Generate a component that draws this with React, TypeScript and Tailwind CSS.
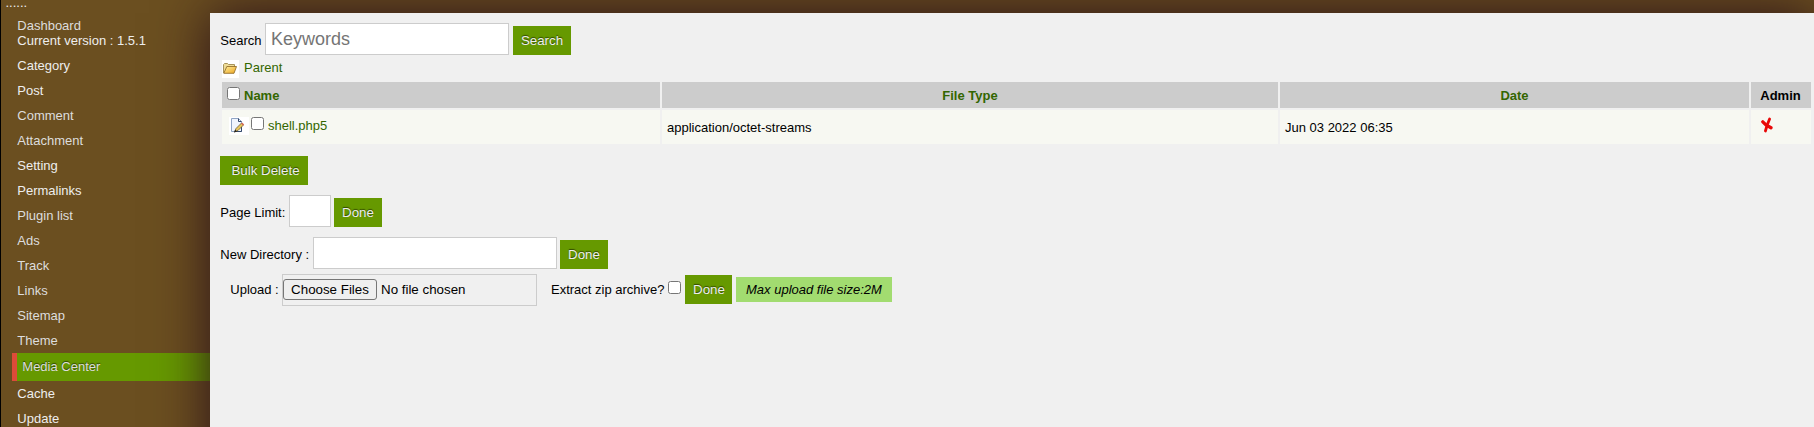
import React from "react";

const items = ["Category", "Post", "Comment", "Attachment", "Setting", "Permalinks", "Plugin list", "Ads", "Track", "Links", "Sitemap", "Theme"];
const dim = ["Comment", "Attachment", "Ads", "Track", "Links", "Sitemap", "Theme", "Plugin list"];

function Check({ className = "" }: { className?: string }) {
  return <input type="checkbox" className={"m-0 size-[13px] shrink-0 " + className} />;
}

function Btn({ children, className = "" }: { children: React.ReactNode; className?: string }) {
  return (
    <button className={"h-[29px] shrink-0 bg-[#669900] text-[13.333px] leading-[15px] text-[#eee] [text-shadow:0_-1px_1px_rgba(0,0,0,0.55)] " + className}>
      {children}
    </button>
  );
}

function Folder() {
  return (
    <svg className="h-[18px] w-[17px] shrink-0 bg-white" viewBox="0 0 17 18">
      <defs>
        <linearGradient id="fold" x1="0" y1="0" x2="1" y2="1">
          <stop offset="0" stopColor="#fff0a0" />
          <stop offset="1" stopColor="#eda41c" />
        </linearGradient>
      </defs>
      <path d="M1.5 13V4.5L2.5 3.5H5.5L6.5 4.5H12.5V7" fill="#eedc98" stroke="#a8945c" />
      <path d="M1.8 13.3L4.8 6.5H14.5L12 13.3Z" fill="url(#fold)" stroke="#96702c" strokeWidth=".9" />
    </svg>
  );
}

function Edit() {
  return (
    <svg className="h-[18px] w-5 shrink-0 bg-white" viewBox="0 0 20 18">
      <path d="M2.5 1.5H9.5L12.5 4.5V14.5H2.5Z" fill="#f0f5fd" stroke="#8fa4c4" />
      <path d="M9.5 1.5V4.5H12.5M12.5 10V14.5H6" fill="none" stroke="#34496b" />
      <path d="M5.5 15L7 11.5L12.5 6L14.5 8L9 13.5Z" fill="#e8c65c" stroke="#5a4a28" strokeWidth=".7" />
      <path d="M12 6.5L13.2 5.4L15.2 7.4L14 8.5Z" fill="#d56a5a" />
      <path d="M5 15.5L6.2 12.8L8 14.4Z" fill="#222" />
    </svg>
  );
}

export default function App() {
  return (
    <div className="flex h-[427px] w-[1814px] overflow-hidden border-l border-black bg-[#6b4f20] font-['Liberation_Sans',Arial,sans-serif] text-[13px] leading-[15px] text-black">
      <nav className="w-[209px] shrink-0 text-[#eee]">
        <div className="h-[18px] pl-[4.5px] leading-[5px]">......</div>
        <div className="pl-[16.3px] text-[#ddd]">Dashboard</div>
        <div className="pl-[16.3px]">Current version : 1.5.1</div>
        <ul className="mt-[5px]">
          {items.map((t) => (
            <li key={t} className={"flex h-[25px] items-center pl-[16.3px] " + (dim.includes(t) ? "text-[#ddd]" : "")}>{t}</li>
          ))}
        </ul>
        <div className="ml-[11px] h-7 border-l-[5px] border-[#dd4b39] bg-[#669900] pt-[6px] pl-[5.3px] text-[#ddd] [text-shadow:0_-1px_1px_rgba(0,0,0,0.55)]">Media Center</div>
        <div className="flex h-[25px] items-center pl-[16.3px]">Cache</div>
        <div className="flex h-[25px] items-center pl-[16.3px]">Update</div>
      </nav>

      <main className="relative mt-[13px] h-[500px] w-[1608px] shrink-0 bg-[#f0f0f0] pl-[10px] shadow-[0_0_50px_#2b111a]">
        <div className="flex pt-[10px]">
          <span className="mt-[10px] w-[45px] pl-[.3px]">Search</span>
          <input placeholder="Keywords" className="h-8 w-[244px] border border-[#ccc] bg-white px-[5px] text-[18px] placeholder:text-[#757575]" />
          <Btn className="mt-[3px] ml-1 w-[58px]">Search</Btn>
        </div>
        <div className="flex h-[22px] pt-[5px] pl-[2px]">
          <Folder />
          <a className="ml-[5px] text-[#336600]">Parent</a>
        </div>

        <div className="ml-[2px] mt-[5px] grid w-[1590px] grid-cols-[438px_616px_469px_60px] gap-x-[2px] gap-y-[2px]">
          <div className="flex h-[26px] bg-[#ccc] pl-[5px] font-bold text-[#336600]">
            <Check className="mt-[5px]" />
            <span className="ml-1 mt-[6px]">Name</span>
          </div>
          <div className="flex items-center justify-center bg-[#ccc] font-bold text-[#336600]">File Type</div>
          <div className="flex items-center justify-center bg-[#ccc] font-bold text-[#336600]">Date</div>
          <div className="flex items-center justify-center bg-[#ccc] pr-px font-bold">Admin</div>
          <div className="flex h-[34px] bg-[#f7f8f2] pt-[7px] pl-[7px]">
            <Edit />
            <Check className="ml-[2px]" />
            <a className="ml-1 mt-px text-[#336600]">shell.php5</a>
          </div>
          <div className="bg-[#f7f8f2] pt-[10px] pl-[5px]">application/octet-streams</div>
          <div className="bg-[#f7f8f2] pt-[10px] pl-[5px]">Jun 03 2022 06:35</div>
          <div className="bg-[#f7f8f2] pt-[7px] pl-[10px]">
            <svg className="h-4 w-3" viewBox="0 0 12 16" fill="none" stroke="#e80808" strokeLinecap="round">
              <path d="M8.6 2L6.2 8L4.4 14" strokeWidth="2.8" />
              <path d="M1.8 4.8L5 8L10 10.8" strokeWidth="3.3" />
            </svg>
          </div>
        </div>

        <Btn className="mt-3 block w-[88px] pl-[3px]">Bulk Delete</Btn>

        <div className="mt-[10px] flex">
          <span className="mt-[10px] w-[69px] pl-[.3px]">Page Limit:</span>
          <input className="h-8 w-[42px] border border-[#ccc] bg-white" />
          <Btn className="mt-[3px] ml-[3px] w-12">Done</Btn>
        </div>
        <div className="mt-[10px] flex">
          <span className="mt-[10px] w-[93px] pl-[.3px]">New Directory :</span>
          <input className="h-8 w-[244px] border border-[#ccc] bg-white" />
          <Btn className="mt-[3px] ml-[3px] w-12">Done</Btn>
        </div>
        <div className="mt-[5px] flex">
          <span className="mt-2 w-[62px] pl-[10.3px]">Upload :</span>
          <div className="flex h-8 w-[255px] items-start border border-[#ccc] pt-1 text-[13.333px]">
            <button className="h-[21px] w-[94px] rounded-[3px] border border-[#767676] bg-[#efefef] leading-[15px]">Choose Files</button>
            <span className="ml-1 mt-[3px]">No file chosen</span>
          </div>
          <span className="ml-[14px] mt-2">Extract zip archive?</span>
          <Check className="ml-1 mt-[7px]" />
          <Btn className="ml-1 mt-px w-[47px]">Done</Btn>
          <em className="ml-1 mt-[3px] flex h-[25px] w-[156px] items-center justify-center bg-[#a2dc70] pr-px">Max upload file size:2M</em>
        </div>
      </main>
    </div>
  );
}
